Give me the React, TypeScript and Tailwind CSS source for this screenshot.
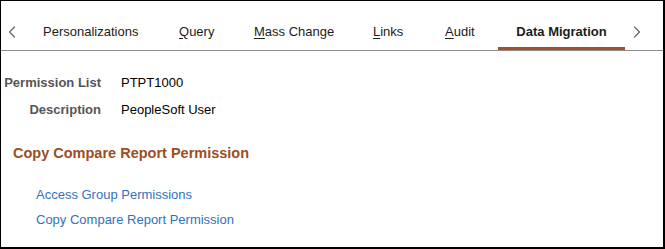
import { ChevronLeft, ChevronRight } from 'lucide-react';

const tabs = [
  { label: 'Personalizations', key: '', w: 'w-[136px]' },
  { label: 'Query', key: 'Q', w: 'w-[75px]' },
  { label: 'Mass Change', key: 'M', w: 'w-[119px]' },
  { label: 'Links', key: 'L', w: 'w-[72px]' },
  { label: 'Audit', key: 'A', w: 'w-[53px]' },
];

function TabLabel({ label, hot }: { label: string; hot: string }) {
  if (!hot) return <>{label}</>;
  return (
    <>
      <span className="underline underline-offset-2">{label[0]}</span>
      {label.slice(1)}
    </>
  );
}

export default function App() {
  return (
    <div className="w-[665px] h-[249px] overflow-hidden bg-white border-l border-t border-r-2 border-b-2 border-black font-['Liberation_Sans',Arial,sans-serif] text-[13px] leading-[16px] whitespace-nowrap">
      <div className="flex h-[50px] border-b border-[#8c8c8c]">
        <div className="flex shrink-0 items-center h-full pt-[12px] w-[42px] pl-[1px] text-[#6b6b6b]">
          <ChevronLeft size={20} strokeWidth={1.5} />
        </div>
        {tabs.map((t) => (
          <div key={t.label} className={`${t.w} shrink-0 h-full flex items-center pt-[12px] text-[#1c1c1c]`}>
            <TabLabel label={t.label} hot={t.key} />
          </div>
        ))}
        <div className="w-[127px] shrink-0 h-full flex items-center justify-center pt-[15px] border-b-[3px] border-[#a0522d] font-bold text-[#1c1c1c]">
          Data Migration
        </div>
        <div className="flex shrink-0 items-center h-full pt-[12px] pl-[2px] text-[#6b6b6b]">
          <ChevronRight size={20} strokeWidth={1.5} />
        </div>
      </div>

      <div className="grid grid-cols-[100px_1fr] gap-x-[20px] gap-y-[11px] pt-[24px]">
        <div className="text-right font-bold text-[#555555]">Permission List</div>
        <div className="text-black">PTPT1000</div>
        <div className="text-right font-bold text-[#555555]">Description</div>
        <div className="text-black">PeopleSoft User</div>
      </div>

      <h2 className="mt-[27px] pl-[12px] text-[14.5px] leading-[17px] font-bold text-[#9c4d22]">Copy Compare Report Permission</h2>

      <div className="flex flex-col gap-[9px] mt-[25px] pl-[35px] text-[#2f72c0]">
        <a href="#">Access Group Permissions</a>
        <a href="#">Copy Compare Report Permission</a>
      </div>
    </div>
  );
}
